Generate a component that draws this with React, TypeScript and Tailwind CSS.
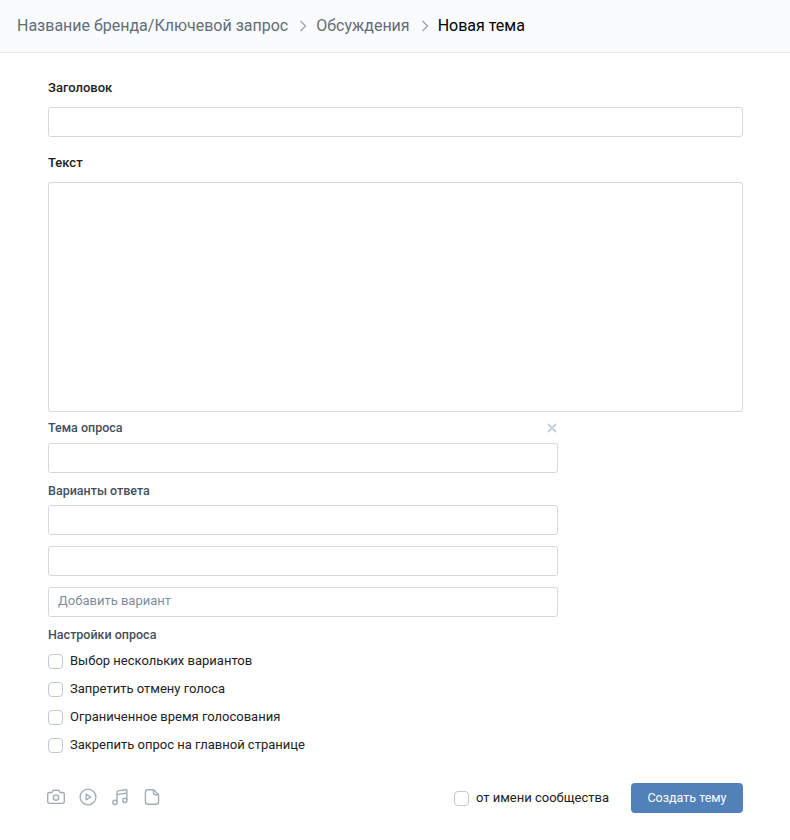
import React from 'react';

const Chevron: React.FC = () => (
  <svg width="8" height="12" viewBox="0 0 8 12" fill="none" className="text-[#99a2ad]">
    <path d="M1.5 1L6.5 6L1.5 11" stroke="currentColor" strokeWidth="1.3" />
  </svg>
);

const TextField: React.FC<{ placeholder?: string; className?: string }> = ({ placeholder, className = '' }) => (
  <input
    type="text"
    placeholder={placeholder}
    className={`block h-[30px] w-full rounded-[3px] border border-[#d3d9de] bg-white px-[9px] pb-[3px] text-[13px] outline-none placeholder:text-[#818c99] ${className}`}
  />
);

const CheckRow: React.FC<{ label: string }> = ({ label }) => (
  <label className="flex h-[28px] items-center gap-[7px] text-[13px] text-[#222]">
    <span className="h-[15px] w-[15px] rounded-[4px] border border-[#c1c9d1] bg-white" />
    {label}
  </label>
);

const iconClass = 'text-[#a3adb8]';

const App: React.FC = () => {
  return (
    <div className="min-h-[840px] bg-white font-['Roboto',sans-serif] text-[#222]">
      <div className="flex h-[53px] items-center border-b border-[#e7e8ec] bg-[#fafbfc] pl-[17px] text-[16px]">
        <span className="text-[#626d7a]">Название бренда/Ключевой запрос</span>
        <span className="ml-[11px] mr-[9px] flex"><Chevron /></span>
        <span className="text-[#626d7a]">Обсуждения</span>
        <span className="ml-[11px] mr-[9px] flex"><Chevron /></span>
        <span className="text-black">Новая тема</span>
      </div>

      <div className="pl-[48px] pr-[47px]">
        <div className="pt-[27px] pb-[11px] text-[13px] leading-[16px] font-medium text-[#222]">Заголовок</div>
        <TextField />
        <div className="pt-[18px] pb-[11px] text-[13px] leading-[16px] font-medium text-[#222]">Текст</div>
        <div className="h-[230px] rounded-[3px] border border-[#d3d9de] bg-white" />

        <div className="w-[510px]">
          <div className="flex h-[31px] items-center justify-between pt-[2px] pr-[1px]">
            <span className="text-[12.5px] font-medium text-[#454f5b]">Тема опроса</span>
            <svg width="10" height="10" viewBox="0 0 10 10" className="-mt-[2px] text-[#c5d0db]">
              <path d="M1 1L9 9M9 1L1 9" stroke="currentColor" strokeWidth="2" />
            </svg>
          </div>
          <TextField />
          <div className="flex h-[32px] items-center pt-[4px] text-[12.5px] font-medium text-[#454f5b]">Варианты ответа</div>
          <TextField />
          <TextField className="mt-[11px]" />
          <TextField className="mt-[11px]" placeholder="Добавить вариант" />
          <div className="flex h-[30px] items-center pt-[6px] text-[12.5px] font-medium text-[#454f5b]">Настройки опроса</div>
        </div>

        <div className="flex flex-col">
          <CheckRow label="Выбор нескольких вариантов" />
          <CheckRow label="Запретить отмену голоса" />
          <CheckRow label="Ограниченное время голосования" />
          <CheckRow label="Закрепить опрос на главной странице" />
        </div>

        <div className="mt-[24px] flex h-[30px] items-center">
          <div className="-ml-[2px] -mt-[2px] flex items-center gap-[12px]">
            <svg width="20" height="20" viewBox="0 0 20 20" fill="none" stroke="currentColor" strokeWidth="1.4" className={iconClass}>
              <path d="M3.5 5.5H6L7 3.7C7.2 3.4 7.5 3.2 7.9 3.2H12.1C12.5 3.2 12.8 3.4 13 3.7L14 5.5H16.5C17.6 5.5 18.3 6.2 18.3 7.3V14.6C18.3 15.7 17.6 16.4 16.5 16.4H3.5C2.4 16.4 1.7 15.7 1.7 14.6V7.3C1.7 6.2 2.4 5.5 3.5 5.5Z" strokeLinejoin="round" />
              <circle cx="10" cy="10.6" r="2.7" />
            </svg>
            <svg width="20" height="20" viewBox="0 0 20 20" fill="none" stroke="currentColor" strokeWidth="1.4" className={iconClass}>
              <circle cx="10" cy="10" r="7.9" />
              <path d="M8.2 7.2V12.8L12.7 10L8.2 7.2Z" strokeLinejoin="round" />
            </svg>
            <svg width="20" height="20" viewBox="0 0 20 20" fill="none" stroke="currentColor" strokeWidth="1.4" className={iconClass}>
              <path d="M7 15.2V5.3C7 4.5 7.4 4 8.2 3.9L15.6 2.7C16.3 2.6 16.9 3 16.9 3.8V13.2" />
              <path d="M7 7.6L16.9 6" />
              <circle cx="4.9" cy="15.4" r="2.1" />
              <circle cx="14.8" cy="13.4" r="2.1" />
            </svg>
            <svg width="20" height="20" viewBox="0 0 20 20" fill="none" stroke="currentColor" strokeWidth="1.4" className={iconClass}>
              <path d="M11.5 2.7H6C4.3 2.7 3.4 3.6 3.4 5.3V14.7C3.4 16.4 4.3 17.3 6 17.3H14C15.7 17.3 16.6 16.4 16.6 14.7V7.8L11.5 2.7Z" strokeLinejoin="round" />
              <path d="M11.5 2.7V5.6C11.5 7 12.3 7.8 13.7 7.8H16.6" strokeLinejoin="round" />
            </svg>
          </div>
          <label className="ml-auto flex items-center gap-[7px] text-[13px] text-[#222]">
            <span className="h-[15px] w-[15px] rounded-[4px] border border-[#c1c9d1] bg-white" />
            от имени сообщества
          </label>
          <button className="ml-[22px] h-[30px] w-[112px] rounded-[4px] bg-[#5181b8] text-[12.5px] text-white">Создать тему</button>
        </div>
      </div>
    </div>
  );
};

export default App;
